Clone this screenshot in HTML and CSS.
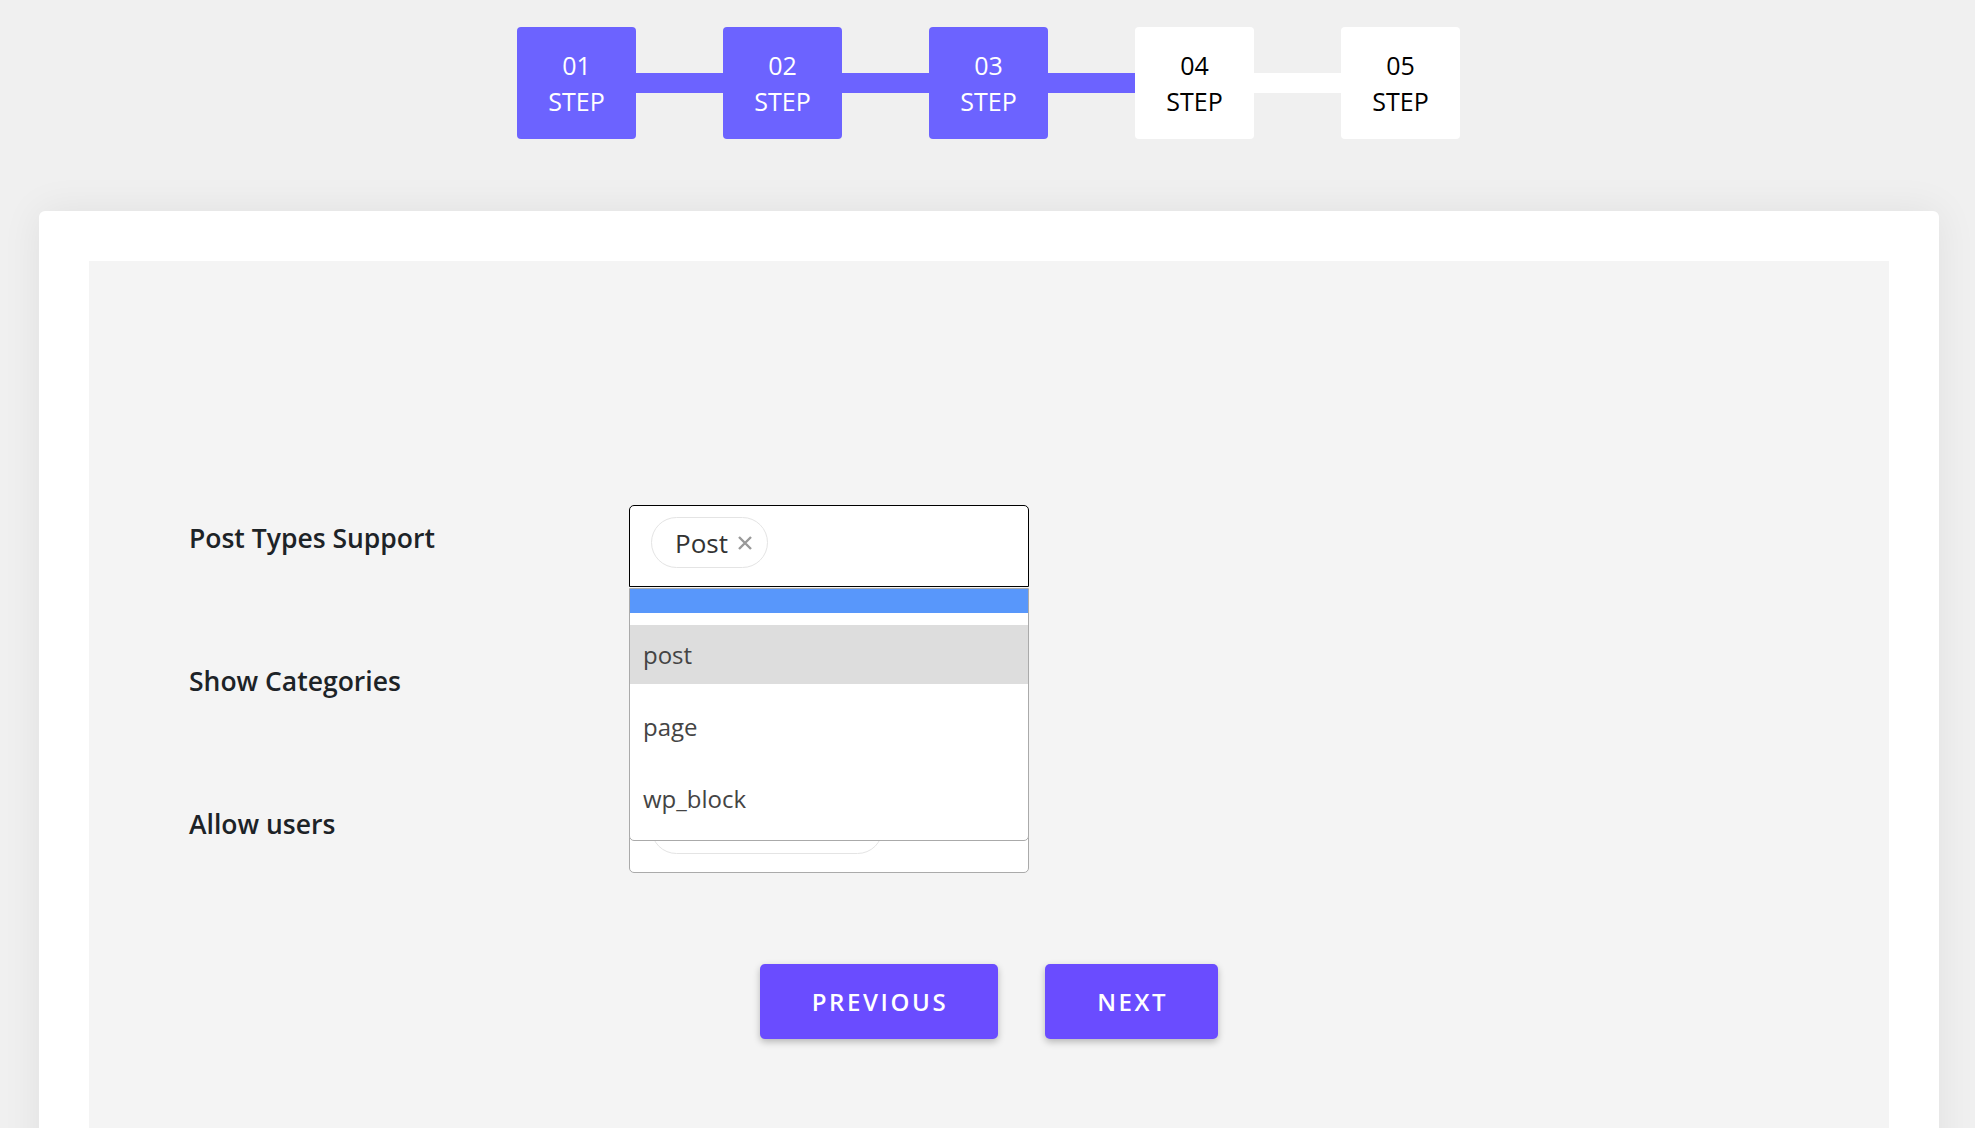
FILE: index.html
```html
<!DOCTYPE html>
<html lang="en">
<head>
<meta charset="UTF-8" />
<title>Setup Wizard</title>
<link rel="stylesheet" href="styles.css">
</head>
<body>

<!-- Steps -->
<div class="steps">
  <div class="step done"><span>01</span><span>STEP</span></div>
  <div class="step-line done"></div>
  <div class="step done"><span>02</span><span>STEP</span></div>
  <div class="step-line done"></div>
  <div class="step done"><span>03</span><span>STEP</span></div>
  <div class="step-line done"></div>
  <div class="step"><span>04</span><span>STEP</span></div>
  <div class="step-line"></div>
  <div class="step"><span>05</span><span>STEP</span></div>
</div>

<!-- Wizard card -->
<div class="card">
  <div class="panel">

    <div class="field">
      <label class="field-label">Post Types Support</label>
      <div class="select-wrap">
        <div class="select focused">
          <span class="chip">Post
            <svg class="chip-x" width="16" height="16" viewBox="0 0 16 16"><path d="M2 2 L14 14 M14 2 L2 14" /></svg>
          </span>
        </div>
        <ul class="dropdown">
          <li class="option highlighted"></li>
          <li class="option selected">post</li>
          <li class="option">page</li>
          <li class="option">wp_block</li>
        </ul>
      </div>
    </div>

    <div class="field">
      <label class="field-label">Show Categories</label>
      <div class="select-wrap">
        <div class="select">
          <span class="chip">Uncategorized
            <svg class="chip-x" width="16" height="16" viewBox="0 0 16 16"><path d="M2 2 L14 14 M14 2 L2 14" /></svg>
          </span>
        </div>
      </div>
    </div>

    <div class="field">
      <label class="field-label">Allow users</label>
      <div class="select-wrap">
        <div class="select">
          <span class="chip">Administrator
            <svg class="chip-x" width="16" height="16" viewBox="0 0 16 16"><path d="M2 2 L14 14 M14 2 L2 14" /></svg>
          </span>
        </div>
      </div>
    </div>

    <div class="actions">
      <button class="btn">PREVIOUS</button>
      <button class="btn">NEXT</button>
    </div>

  </div>
</div>

</body>
</html>
```

FILE: styles.css
```css
html, body {
  height: 100%;
  overflow: hidden;
}
body {
  margin: 0;
  background: #f0f0f0;
  font-family: "Open Sans", "Noto Sans", sans-serif;
}

/* Steps */
.steps {
  display: flex;
  justify-content: center;
  align-items: center;
  padding: 27px 0 0 2px;
}
.step {
  width: 119px;
  height: 112px;
  box-sizing: border-box;
  padding: 20px 0;
  background: #fff;
  color: #000;
  border-radius: 4px;
  display: flex;
  flex-direction: column;
  align-items: center;
  font-size: 25px;
  line-height: 36px;
}
.step.done {
  background: #6c63ff;
  color: #fff;
}
.step-line {
  width: 87px;
  height: 20px;
  background: #fff;
}
.step-line.done {
  background: #6c63ff;
}

/* Card */
.card {
  width: 1900px;
  box-sizing: border-box;
  margin: 72px 0 0 39px;
  padding: 50px 50px 0;
  background: #fff;
  border-radius: 6px;
  box-shadow: 0 0 40px rgba(0, 0, 0, 0.07);
}
.panel {
  background: #f4f4f4;
  padding: 244px 100px 200px;
}

/* Fields */
.field {
  display: flex;
  align-items: flex-start;
  margin-bottom: 61px;
}
.field-label {
  width: 440px;
  margin-top: 14px;
  font-size: 26.5px;
  line-height: 39px;
  font-weight: 600;
  color: #1d2327;
}
.select-wrap {
  position: relative;
  width: 400px;
}
.select {
  height: 82px;
  box-sizing: border-box;
  padding: 11px 21px;
  background: #fff;
  border: 1px solid #aaa;
  border-radius: 5px;
}
.select.focused {
  border-color: #000;
  border-radius: 5px 5px 0 0;
}
.chip {
  display: inline-flex;
  align-items: center;
  gap: 9px;
  height: 51px;
  box-sizing: border-box;
  padding: 1px 14px 0 23px;
  border: 1px solid #e4e4e4;
  border-radius: 26px;
  font-size: 26px;
  color: #333;
}
.chip-x {
  stroke: #999;
  stroke-width: 2.4;
  fill: none;
}

/* Dropdown */
.dropdown {
  position: absolute;
  top: 83px;
  left: 0;
  right: 0;
  z-index: 5;
  margin: 0;
  padding: 0 0 12px;
  list-style: none;
  background: #fff;
  border: 1px solid #aaa;
  border-radius: 0 0 5px 5px;
  display: flex;
  flex-direction: column;
  gap: 12px;
}
.option {
  padding: 11px 13px;
  font-size: 24px;
  line-height: 37px;
  color: #444;
}
.option + .option + .option {
  margin-top: 1px;
}
.option.highlighted {
  height: 24px;
  padding: 0;
  background: #5897fb;
}
.option.selected {
  background: #ddd;
}

/* Buttons */
.actions {
  display: flex;
  justify-content: center;
  gap: 47px;
  padding-top: 30px;
}
.btn {
  height: 75px;
  padding: 0 50px 0 52px;
  border: none;
  border-radius: 5px;
  background: #6a4cff;
  color: #fff;
  font-family: inherit;
  font-size: 24px;
  font-weight: 600;
  letter-spacing: 2.6px;
  box-shadow: 0 3px 7px rgba(0, 0, 0, 0.25);
  cursor: pointer;
}
```
